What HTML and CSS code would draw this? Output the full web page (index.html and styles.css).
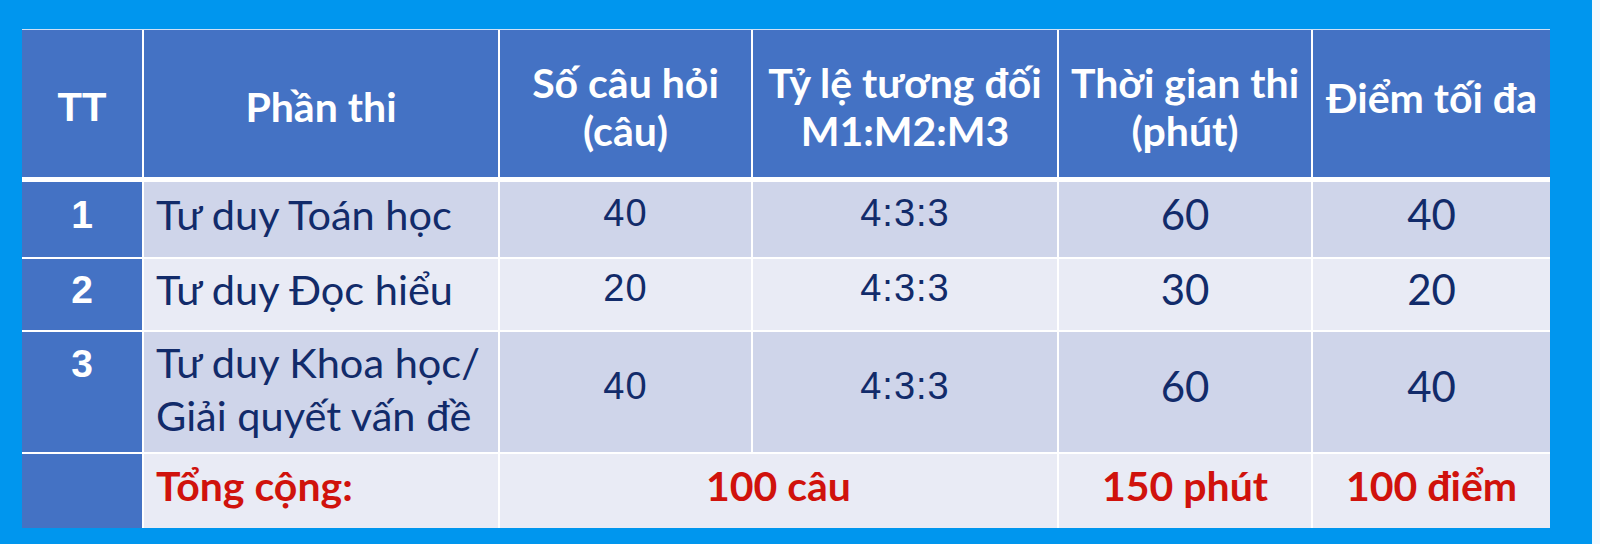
FILE: index.html
```html
<!DOCTYPE html>
<html lang="vi">
<head>
<meta charset="utf-8">
<title>Cấu trúc bài thi</title>
<link rel="stylesheet" href="styles.css">
</head>
<body>
<div class="page">
  <div class="stage">
    <div class="grid">
      <div class="cell head tt-head">TT</div>
      <div class="cell head">Phần thi</div>
      <div class="cell head">Số câu hỏi<br>(câu)</div>
      <div class="cell head">Tỷ lệ tương đối<br>M1:M2:M3</div>
      <div class="cell head">Thời gian thi<br>(phút)</div>
      <div class="cell head raise">Điểm tối đa</div>

      <div class="cell tt">1</div>
      <div class="cell odd name">Tư duy Toán học</div>
      <div class="cell odd num">40</div>
      <div class="cell odd num">4:3:3</div>
      <div class="cell odd big">60</div>
      <div class="cell odd big">40</div>

      <div class="cell tt">2</div>
      <div class="cell even name">Tư duy Đọc hiểu</div>
      <div class="cell even num">20</div>
      <div class="cell even num">4:3:3</div>
      <div class="cell even big">30</div>
      <div class="cell even big">20</div>

      <div class="cell tt top">3</div>
      <div class="cell odd name two">Tư duy Khoa học/<br>Giải quyết vấn đề</div>
      <div class="cell odd num">40</div>
      <div class="cell odd num">4:3:3</div>
      <div class="cell odd big">60</div>
      <div class="cell odd big">40</div>

      <div class="cell tt"></div>
      <div class="cell even name total">Tổng cộng:</div>
      <div class="cell even total span2">100 câu</div>
      <div class="cell even total">150 phút</div>
      <div class="cell even total">100 điểm</div>
    </div>
  </div>
  <div class="edge"></div>
</div>
</body>
</html>
```

FILE: styles.css
```css
* { box-sizing: border-box; }

html, body {
  margin: 0;
  padding: 0;
}

body {
  font-family: "Lato", "Liberation Sans", sans-serif;
  background: #ffffff;
}

.page {
  display: flex;
  width: 1600px;
  height: 544px;
}

.stage {
  width: 1592px;
  height: 544px;
  background: #0096ee;
  padding: 29px 0 0 22px;
}

.edge {
  width: 8px;
  height: 544px;
  background: #f4f8fd;
}

.grid {
  display: grid;
  width: 1528px;
  grid-template-columns: 120px 354px 251px 304px 252px 237px;
  grid-template-rows: 150px 75px 71px 120px 74px;
  column-gap: 2px;
  row-gap: 2px;
  background: #ffffff;
  border-top: 1px solid #cfe0f6;
}

.cell {
  display: flex;
  align-items: center;
  justify-content: center;
  text-align: center;
  color: #122b6a;
  font-size: 41.5px;
  padding-bottom: 12px;
}

.head {
  background: #4472c4;
  color: #ffffff;
  font-weight: 700;
  font-size: 41px;
  line-height: 48px;
  border-bottom: 3px solid #ffffff;
  padding: 6px 0 0 0;
}

.tt-head {
  font-family: "Liberation Sans", Arial, sans-serif;
  font-size: 40px;
}

.raise {
  padding: 0 0 12px 0;
}

.tt {
  background: #4472c4;
  color: #ffffff;
  font-family: "Liberation Sans", Arial, sans-serif;
  font-weight: 700;
  font-size: 39px;
  padding-bottom: 10px;
}

.tt.top {
  align-items: flex-start;
  padding: 10px 0 0 0;
}

.odd { background: #cfd5ea; }
.even { background: #e9ebf5; }

.name {
  justify-content: flex-start;
  text-align: left;
  padding-left: 12px;
}

.two {
  line-height: 53px;
  padding-bottom: 6px;
}

.num {
  font-family: "Liberation Sans", Arial, sans-serif;
  font-size: 38px;
  letter-spacing: 1px;
}

.big {
  font-size: 42px;
}

.total {
  color: #d0120c;
  font-weight: 700;
  font-size: 41px;
}

.span2 {
  grid-column: span 2;
}
```
